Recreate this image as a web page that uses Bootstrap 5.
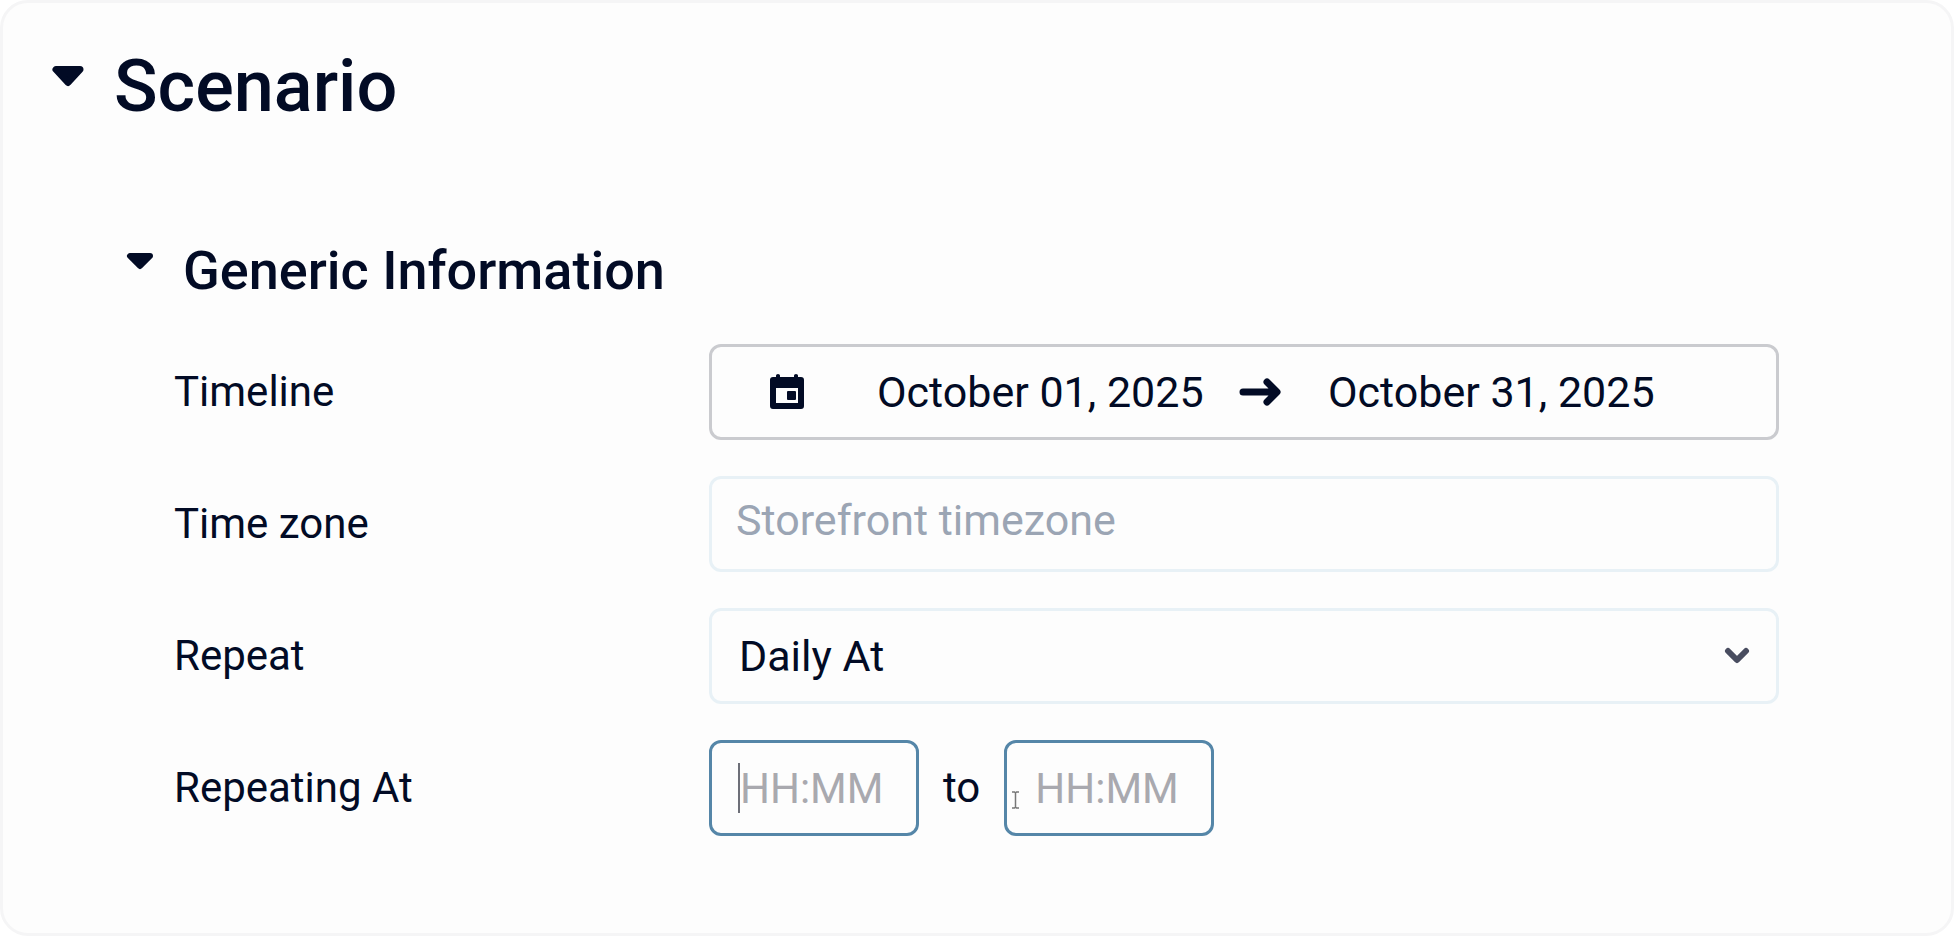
<!DOCTYPE html>
<html lang="en">
<head>
<meta charset="utf-8">
<meta name="viewport" content="width=device-width, initial-scale=1">
<title>Scenario</title>
<link href="https://cdn.jsdelivr.net/npm/bootstrap@5.3.0/dist/css/bootstrap.min.css" rel="stylesheet">
<style>
  :root { --ink: #020b25; }
  body { font-family: Roboto, "Liberation Sans", sans-serif; color: var(--ink); background: #fff; }
  .panel { min-height: 100vh; background: #fdfdfd; border: 3px solid #f5f5f6; border-radius: 28px; padding: 42px 0 64px; }
  .toggle { border: 0; background: none; padding: 0; color: inherit; font-weight: 500; display: flex; align-items: flex-start; text-align: left; }
  .toggle svg { flex: none; fill: currentColor; stroke: currentColor; stroke-linejoin: round; }
  .toggle-main { font-size: 72px; line-height: 84px; margin-left: 48px; gap: 29px; }
  .toggle-main svg { margin-top: 20px; }
  .toggle-sub { font-size: 54px; line-height: 64px; margin: 110px 0 41px 123px; gap: 29px; }
  .toggle-sub svg { margin-top: 13px; }
  .fields { padding: 0 172px 0 171px; font-size: 42px; line-height: 52px; display: grid; gap: 36px; }
  .box { height: 96px; border: 3px solid #e8f1f6; border-radius: 12px; background-color: #fdfdfd; color: var(--ink); font-size: 43px; line-height: 52px; padding: 0 27px; width: 100%; }
  .box::placeholder { color: #9ba5b4; opacity: 1; }
  .box-range { border-color: #cacbcf; padding: 0 0 0 57px; }
  .box-zone { padding-bottom: 8px; padding-left: 24px; }
  .box-time { width: 210px; font-size: 42px; border-color: #5586a8; padding: 0 0 0 28px; }
  .box-time::placeholder { color: #a9a9af; }
  .box-select { appearance: none; background: #fdfdfd url("data:image/svg+xml,%3Csvg xmlns='http://www.w3.org/2000/svg' width='26' height='18' viewBox='0 0 26 18'%3E%3Cpath d='M4 4l9 9 9-9' fill='none' stroke='%23494d60' stroke-width='6' stroke-linecap='round' stroke-linejoin='round'/%3E%3C/svg%3E") no-repeat right 26px center; }
  .date { border: 0; padding: 0; background: none; color: inherit; width: 332px; min-width: 0; }
  .date-start { margin: 0 29px 0 72px; }
  .date-end { margin-left: 46px; }
  .text-caret { position: absolute; left: 29px; top: 23px; width: 2px; height: 50px; background: #6d6f78; }
  .pointer { position: absolute; left: 7px; top: 51px; }
</style>
</head>
<body>
<main class="panel">
  <h1 class="m-0"><button class="toggle toggle-main" type="button" aria-expanded="true">
    <svg width="34" height="24" viewBox="0 0 34 24" aria-hidden="true"><path d="M5 4.500H29L17 17.500Z" stroke-width="7"/></svg>
    Scenario</button></h1>
  <h2 class="m-0"><button class="toggle toggle-sub" type="button" aria-expanded="true">
    <svg width="28" height="20" viewBox="0 0 28 20" aria-hidden="true"><path d="M4 4H24L14 14Z" stroke-width="6"/></svg>
    Generic Information</button></h2>

  <form class="fields">
    <div class="row g-0 align-items-center">
      <label class="col-4" for="from">Timeline</label>
      <div class="col-8">
        <div class="box box-range d-flex align-items-center">
          <svg class="flex-shrink-0" width="36" height="36" viewBox="0 0 36 36" aria-hidden="true"><path fill="#020b25" fill-rule="evenodd" d="M7 3V1.500Q7 0 9 0T11 1.500V3H25V1.500Q25 0 27 0T29 1.500V3H32Q35 3 35 6V32Q35 35 32 35H4Q1 35 1 32V6Q1 3 4 3ZM7 14V29H29V14ZM19 17H26Q27 17 27 18V25Q27 26 26 26H19Q18 26 18 25V18Q18 17 19 17Z"/></svg>
          <input class="date date-start" id="from" type="text" value="October 01, 2025">
          <svg class="flex-shrink-0" width="44" height="30" viewBox="0 0 44 30" aria-hidden="true"><path d="M5 15H38M29 5L39 15 29 25" fill="none" stroke="#020b25" stroke-width="7" stroke-linecap="round" stroke-linejoin="round"/></svg>
          <input class="date date-end" type="text" value="October 31, 2025" aria-label="End date">
        </div>
      </div>
    </div>
    <div class="row g-0 align-items-center">
      <label class="col-4" for="zone">Time zone</label>
      <div class="col-8"><input class="box box-zone" id="zone" type="text" placeholder="Storefront timezone"></div>
    </div>
    <div class="row g-0 align-items-center">
      <label class="col-4" for="repeat">Repeat</label>
      <div class="col-8"><select class="box box-select" id="repeat"><option>Daily At</option></select></div>
    </div>
    <div class="row g-0 align-items-center">
      <label class="col-4" for="start">Repeating At</label>
      <div class="col-8 d-flex align-items-center">
        <div class="position-relative"><input class="box box-time" id="start" type="text" placeholder="HH:MM"><span class="text-caret"></span></div>
        <label class="px-4" for="end">to</label>
        <div class="position-relative"><input class="box box-time" id="end" type="text" placeholder="HH:MM">
          <svg class="pointer" width="9" height="18" viewBox="0 0 9 18" aria-hidden="true"><path d="M1 1H3.500L4.500 2 5.500 1H8M4.500 2V16M1 17H3.500L4.500 16 5.500 17H8" fill="none" stroke="#777" stroke-width="1.500"/></svg></div>
      </div>
    </div>
  </form>
</main>
<script src="https://cdn.jsdelivr.net/npm/bootstrap@5.3.0/dist/js/bootstrap.bundle.min.js"></script>
</body>
</html>
